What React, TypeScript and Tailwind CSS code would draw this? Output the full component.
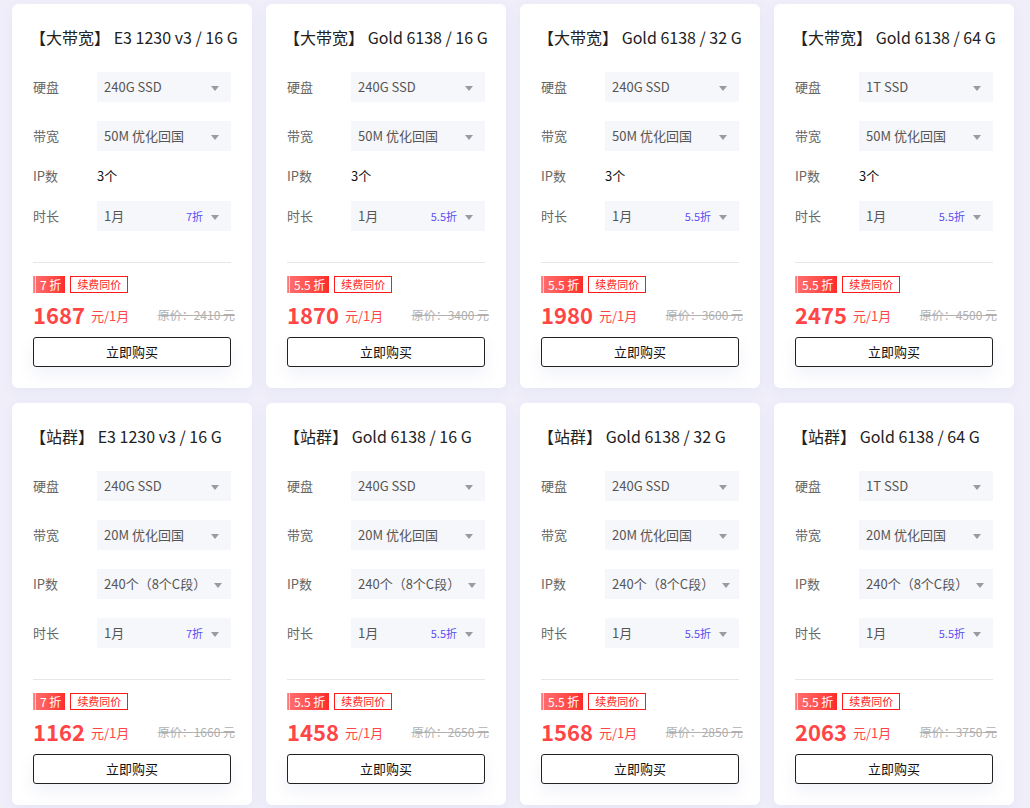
import React from 'react';

type Plan = {
   tag: string;
   cpu: string;
   disk: string;
   bw: string;
   ip: string;
   ipSelect: boolean;
   discount: string;
   price: number;
   original: number;
};

const cpus = ['E3 1230 v3 / 16 G', 'Gold 6138 / 16 G', 'Gold 6138 / 32 G', 'Gold 6138 / 64 G'];
const disks = ['240G SSD', '240G SSD', '240G SSD', '1T SSD'];
const discounts = ['7', '5.5', '5.5', '5.5'];

const bigBw = [
   [1687, 2410],
   [1870, 3400],
   [1980, 3600],
   [2475, 4500],
];
const cluster = [
   [1162, 1660],
   [1458, 2650],
   [1568, 2850],
   [2063, 3750],
];

const plans: Plan[] = [
   ...bigBw.map(([price, original], i) => ({
      tag: '大带宽',
      cpu: cpus[i],
      disk: disks[i],
      bw: '50M 优化回国',
      ip: '3个',
      ipSelect: false,
      discount: discounts[i],
      price,
      original,
   })),
   ...cluster.map(([price, original], i) => ({
      tag: '站群',
      cpu: cpus[i],
      disk: disks[i],
      bw: '20M 优化回国',
      ip: '240个（8个C段）',
      ipSelect: true,
      discount: discounts[i],
      price,
      original,
   })),
];

const Caret = () => (
   <svg width="8" height="5" viewBox="0 0 8 5" className="ml-[8px] mt-[2px] shrink-0">
      <path d="M0 0 L8 0 L4 5 Z" fill="#9a9aa3" />
   </svg>
);

const Select: React.FC<{ value: string; note?: string }> = ({ value, note }) => (
   <div className="flex h-[30px] w-[134px] items-center bg-[#f6f7fb] pl-[7px] pr-[12px] text-[13px] text-[#555]">
      <span className="whitespace-nowrap">{value}</span>
      <span className="ml-auto whitespace-nowrap text-[11px] text-[#5b4ff0]">{note}</span>
      <Caret />
   </div>
);

const Row: React.FC<{ label: string; children: React.ReactNode; short?: boolean }> = ({
   label,
   children,
   short,
}) => (
   <div className={`flex items-center ${short ? 'h-[12px]' : 'h-[30px]'}`}>
      <span className="w-[64px] shrink-0 text-[13px] text-[#666]">{label}</span>
      {children}
   </div>
);

const PlanCard: React.FC<{ plan: Plan }> = ({ plan }) => (
   <div className="w-[240px] rounded-[6px] bg-white px-[21px] pt-[22px] pb-[21px] shadow-[0_4px_14px_rgba(110,100,200,0.06)]">
      <div className="whitespace-nowrap text-[16px] leading-[22px] text-[#222]">
         <span className="ml-[-3px]">【{plan.tag}】</span> {plan.cpu}
      </div>
      <div className="mt-[24px] flex flex-col gap-[19px]">
         <Row label="硬盘">
            <Select value={plan.disk} />
         </Row>
         <Row label="带宽">
            <Select value={plan.bw} />
         </Row>
         {plan.ipSelect ? (
            <Row label="IP数">
               <Select value={plan.ip} />
            </Row>
         ) : (
            <Row label="IP数" short>
               <span className="text-[13px] text-[#111]">{plan.ip}</span>
            </Row>
         )}
         <Row label="时长">
            <Select value="1月" note={`${plan.discount}折`} />
         </Row>
      </div>
      <div className="mt-[31px] h-px bg-[#e5e5ea]" />
      <div className="mt-[13px] flex h-[17px] items-center gap-[5px]">
         <div className="flex h-[17px] items-stretch">
            <span className="w-[2px] bg-gradient-to-r from-[#ff9a9a] to-[#ff6a6a]" />
            <span className="w-px bg-[#ffd0d0]" />
            <span className="flex items-center bg-gradient-to-r from-[#ff6b6b] to-[#ff2a2a] px-[4px] text-[12px] leading-none text-white">
               {plan.discount} 折
            </span>
         </div>
         <span className="flex h-[17px] items-center border border-[#ff1a1a] px-[6px] text-[11px] leading-none text-[#ff2222]">
            续费同价
         </span>
      </div>
      <div className="mt-[8px] flex h-[26px] items-center">
         <span className="text-[22px] font-bold leading-none text-[#ff4545]">{plan.price}</span>
         <span className="ml-[6px] mt-[4px] text-[13px] text-[#ff4545]">元/1月</span>
         <span className="ml-auto mr-[-4px] mt-[2px] text-[12px] text-[#b0b0b0] line-through">
            原价：{plan.original} 元
         </span>
      </div>
      <button className="mt-[10px] flex h-[30px] w-full items-center justify-center rounded-[3px] border border-[#222] bg-white text-[13px] text-[#111] shadow-[0_8px_16px_rgba(120,130,200,0.10)]">
         立即购买
      </button>
   </div>
);

export default function App() {
   return (
      <div
         className="min-h-[808px] w-[1030px] bg-[#efeef9] pl-[12px] pt-[4px]"
         style={{ fontFamily: '"Noto Sans CJK SC", "Noto Sans", sans-serif' }}
      >
         <div className="grid grid-cols-[repeat(4,240px)] gap-x-[14px] gap-y-[15px]">
            {plans.map((plan, i) => (
               <PlanCard key={i} plan={plan} />
            ))}
         </div>
      </div>
   );
}
